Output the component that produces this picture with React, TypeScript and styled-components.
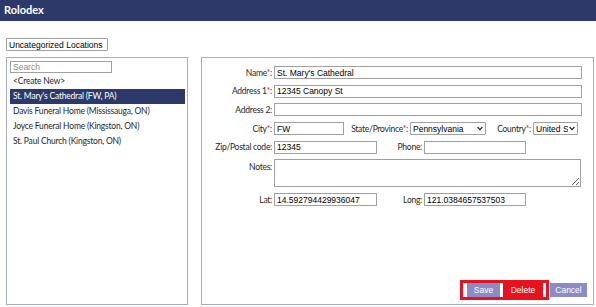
import React from 'react';
import styled, { createGlobalStyle } from 'styled-components';

const colors = {
  navy: '#2d3969',
  panelBorder: '#a5abcb',
  inputBorder: '#a0a0a0',
  lavender: '#8b8bc7',
  red: '#e8121f',
  text: '#1f1f1f',
  required: '#e8121f',
};

const inputFont = `8.5px "Liberation Sans", Arial, sans-serif`;

const GlobalStyle = createGlobalStyle`
  body {
    margin: 0;
    background: #fff;
    font-family: Lato, "Liberation Sans", sans-serif;
    color: ${colors.text};
  }
`;

const Header = styled.div`
  height: 21px;
  box-sizing: border-box;
  background: ${colors.navy};
  color: #fff;
  font-size: 11px;
  font-weight: 700;
  padding: 3px 0 0 4px;
`;

const Content = styled.div`
  padding: 17px 2px 0 6px;
`;

const CategorySelect = styled.select`
  display: block;
  appearance: none;
  width: 102px;
  height: 13px;
  box-sizing: border-box;
  font: ${inputFont};
  color: #000;
  border: 1px solid ${colors.inputBorder};
  border-radius: 1px;
  padding: 0 2px;
  background: #fff;
`;

const Panels = styled.div`
  display: flex;
  gap: 13px;
  margin-top: 6px;
  height: 248px;
`;

const LeftPanel = styled.div`
  width: 182px;
  box-sizing: border-box;
  border: 1px solid ${colors.panelBorder};
  padding: 3px 2px 0 3px;
`;

const SearchInput = styled.input`
  display: block;
  width: 102px;
  height: 12px;
  box-sizing: border-box;
  font: ${inputFont};
  border: 1px solid ${colors.inputBorder};
  padding: 0 2px;
  margin-bottom: 1px;
  &::placeholder {
    color: #8a8a8a;
  }
`;

const List = styled.ul`
  list-style: none;
  margin: 0;
  padding: 0;
`;

const ListItem = styled.li<{ $selected?: boolean }>`
  height: 15px;
  line-height: 15px;
  padding-left: 3px;
  font-size: 8.5px;
  letter-spacing: -0.2px;
  white-space: nowrap;
  background: ${(p) => (p.$selected ? colors.navy : 'transparent')};
  color: ${(p) => (p.$selected ? '#fff' : colors.text)};
`;

const RightPanel = styled.div`
  width: 393px;
  box-sizing: border-box;
  border: 1px solid ${colors.panelBorder};
  padding: 8px 6px 4px 4px;
  display: flex;
  flex-direction: column;
`;

const Form = styled.div`
  display: grid;
  grid-template-columns: 66px 1fr;
  column-gap: 2px;
  row-gap: 5.7px;
  align-items: center;
`;

const Label = styled.label<{ $top?: boolean }>`
  font-size: 8.5px;
  letter-spacing: -0.25px;
  text-align: right;
  white-space: nowrap;
  align-self: ${(p) => (p.$top ? 'start' : 'center')};
  padding-top: ${(p) => (p.$top ? '3px' : '0')};
`;

const Req = styled.span`
  color: ${colors.required};
`;

const Inline = styled.div`
  display: flex;
  align-items: center;
`;

const SubLabel = styled.label<{ $width: number }>`
  width: ${(p) => p.$width}px;
  flex: none;
  font-size: 8.5px;
  letter-spacing: -0.25px;
  text-align: right;
  white-space: nowrap;
  padding-right: 2px;
  box-sizing: border-box;
`;

const TextInput = styled.input<{ $width: number }>`
  width: ${(p) => p.$width}px;
  height: 13px;
  box-sizing: border-box;
  flex: none;
  font: ${inputFont};
  color: #000;
  border: 1px solid ${colors.inputBorder};
  padding: 0 2px;
`;

const SelectWrap = styled.div<{ $width: number }>`
  position: relative;
  width: ${(p) => p.$width}px;
  height: 13px;
  flex: none;
`;

const Dropdown = styled.select`
  appearance: none;
  display: block;
  width: 100%;
  height: 13px;
  box-sizing: border-box;
  font: ${inputFont};
  color: #000;
  border: 1px solid ${colors.inputBorder};
  border-radius: 1px;
  padding: 0 9px 0 2px;
  background: #fff;
`;

const Chevron = styled.svg`
  position: absolute;
  right: 3px;
  top: 4px;
  width: 6px;
  height: 5px;
  pointer-events: none;
`;

const Notes = styled.textarea`
  display: block;
  width: 307px;
  height: 28px;
  box-sizing: border-box;
  font: ${inputFont};
  border: 1px solid ${colors.inputBorder};
  padding: 2px;
`;

const ButtonBar = styled.div`
  margin-top: auto;
  display: flex;
  justify-content: flex-end;
  align-items: center;
  gap: 1px;
`;

const Highlight = styled.div`
  display: flex;
  gap: 3px;
  border: 3px solid ${colors.red};
  padding: 0 3px 0 4px;
  background: #fff;
`;

const Button = styled.button<{ $danger?: boolean; $width: number }>`
  width: ${(p) => p.$width}px;
  height: 14px;
  border: none;
  padding: 0;
  font: ${inputFont};
  color: #fff;
  background: ${(p) => (p.$danger ? colors.red : colors.lavender)};
`;

const Select: React.FC<{ width: number; value: string; label: string }> = ({ width, value, label }) => (
  <SelectWrap $width={width}>
    <Dropdown defaultValue={value}>
      <option value={value}>{label}</option>
    </Dropdown>
    <Chevron viewBox="0 0 6 5">
      <path d="M0.6 1 L3 3.6 L5.4 1" fill="none" stroke="#222" strokeWidth="1.2" />
    </Chevron>
  </SelectWrap>
);

const locations = [
  '<Create New>',
  "St. Mary's Cathedral (FW, PA)",
  'Davis Funeral Home (Mississauga, ON)',
  'Joyce Funeral Home (Kingston, ON)',
  'St. Paul Church (Kingston, ON)',
];

const App: React.FC = () => {
  return (
    <>
      <GlobalStyle />
      <Header>Rolodex</Header>
      <Content>
        <CategorySelect defaultValue="uncat">
          <option value="uncat">Uncategorized Locations</option>
        </CategorySelect>
        <Panels>
          <LeftPanel>
            <SearchInput placeholder="Search" />
            <List>
              {locations.map((loc, i) => (
                <ListItem key={loc} $selected={i === 1}>
                  {loc}
                </ListItem>
              ))}
            </List>
          </LeftPanel>
          <RightPanel>
            <Form>
              <Label>
                Name<Req>*</Req>:
              </Label>
              <TextInput $width={308} defaultValue="St. Mary's Cathedral" />

              <Label>
                Address 1<Req>*</Req>:
              </Label>
              <TextInput $width={308} defaultValue="12345 Canopy St" />

              <Label>Address 2:</Label>
              <TextInput $width={308} defaultValue="" />

              <Label>
                City<Req>*</Req>:
              </Label>
              <Inline>
                <TextInput $width={70} defaultValue="FW" />
                <SubLabel $width={66}>
                  State/Province<Req>*</Req>:
                </SubLabel>
                <Select width={76} value="PA" label="Pennsylvania" />
                <SubLabel $width={47}>
                  Country<Req>*</Req>:
                </SubLabel>
                <Select width={45} value="US" label="United States" />
              </Inline>

              <Label>Zip/Postal code:</Label>
              <Inline>
                <TextInput $width={103} defaultValue="12345" />
                <SubLabel $width={47}>Phone:</SubLabel>
                <TextInput $width={102} defaultValue="" />
              </Inline>

              <Label $top>Notes:</Label>
              <Notes defaultValue="" />

              <Label>Lat:</Label>
              <Inline>
                <TextInput $width={103} defaultValue="14.592794429936047" />
                <SubLabel $width={47}>Long:</SubLabel>
                <TextInput $width={102} defaultValue="121.0384657537503" />
              </Inline>
            </Form>
            <ButtonBar>
              <Highlight>
                <Button $width={33}>Save</Button>
                <Button $width={40} $danger>
                  Delete
                </Button>
              </Highlight>
              <Button $width={37}>Cancel</Button>
            </ButtonBar>
          </RightPanel>
        </Panels>
      </Content>
    </>
  );
};

export default App;
